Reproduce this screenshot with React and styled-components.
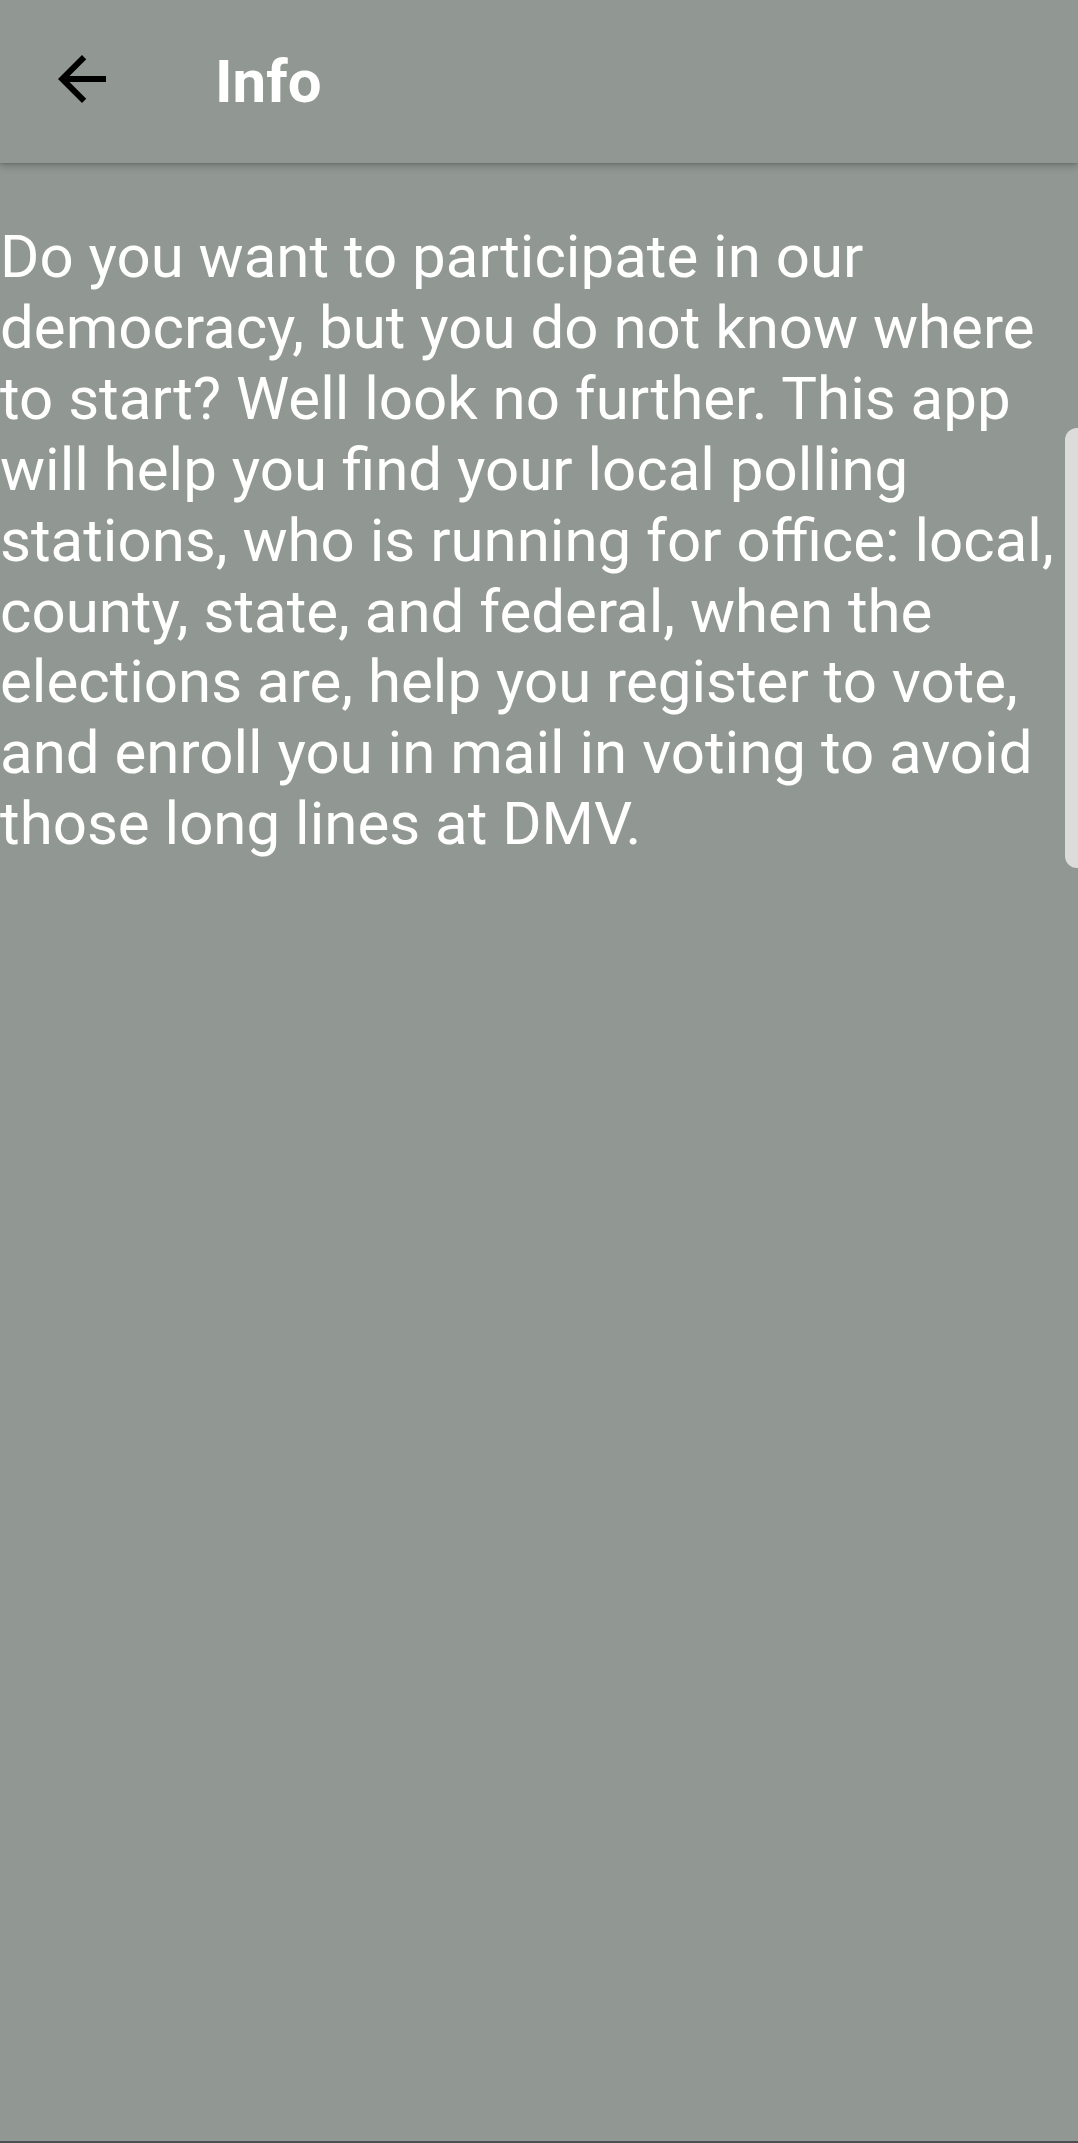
import React from "react";
import styled, { createGlobalStyle } from "styled-components";

const Global = createGlobalStyle`
  html, body { margin: 0; padding: 0; background: #919792; }
  body { font-family: Roboto, "Noto Sans", "Liberation Sans", sans-serif; }
  #root { min-height: 2143px; }
`;

const Screen = styled.div`
  position: relative;
  width: 1078px;
  height: 2143px;
  background: #919792;
  display: flex;
  flex-direction: column;
  overflow: hidden;
  border-bottom: 2px solid #4b4f51;
  box-sizing: border-box;
`;

const AppBar = styled.header`
  position: relative;
  z-index: 1;
  height: 163px;
  flex: none;
  display: flex;
  align-items: center;
  background: #919792;
  box-shadow: 0 3px 8px rgba(0, 0, 0, 0.22), 0 1px 2px rgba(0, 0, 0, 0.12);
`;

const BackButton = styled.button`
  width: 72px;
  height: 72px;
  margin-left: 46px;
  margin-top: -6px;
  padding: 0;
  border: none;
  background: transparent;
  display: flex;
  align-items: center;
  justify-content: center;
`;

const Title = styled.h1`
  margin: 0 0 0 97px;
  font-family: Roboto, "Noto Sans", sans-serif;
  font-weight: 700;
  font-size: 60px;
  color: #ffffff;
  letter-spacing: 0;
`;

const Content = styled.main`
  padding: 59px 0 0 0;
  width: 1062px;
`;

const Paragraph = styled.p`
  margin: 0;
  font-family: Roboto, "Noto Sans", sans-serif;
  font-size: 60px;
  line-height: 70.9px;
  color: #ffffff;
`;

const ScrollThumb = styled.div`
  position: absolute;
  right: 0;
  top: 428px;
  width: 13px;
  height: 440px;
  background: #dcdcda;
  border-radius: 12px 0 0 12px;
`;

export default function App() {
  return (
    <>
      <Global />
      <Screen>
        <AppBar>
          <BackButton aria-label="Back">
            <svg width="72" height="72" viewBox="0 0 24 24">
              <path
                fill="#000"
                d="M20 11H7.83l5.59-5.59L12 4l-8 8 8 8 1.41-1.41L7.83 13H20v-2z"
              />
            </svg>
          </BackButton>
          <Title>Info</Title>
        </AppBar>
        <Content>
          <Paragraph>
            Do you want to participate in our democracy, but you do not know where to start? Well look no further. This app will help you find your local polling stations, who is running for office: local, county, state, and federal, when the elections are, help you register to vote, and enroll you in mail in voting to avoid those long lines at DMV.
          </Paragraph>
        </Content>
        <ScrollThumb />
      </Screen>
    </>
  );
}
